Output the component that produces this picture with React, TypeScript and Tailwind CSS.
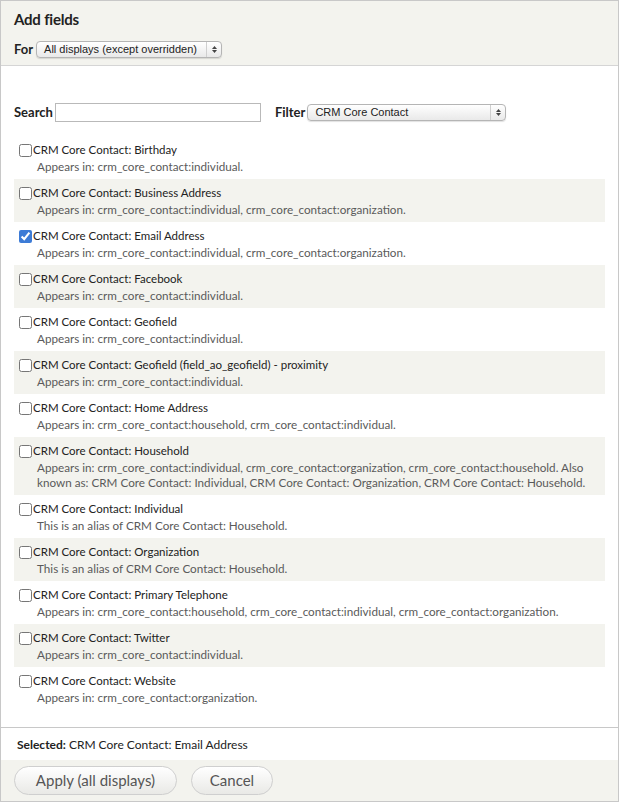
import { useState } from 'react';

const fields = [
  { name: 'Birthday', desc: 'Appears in: crm_core_contact:individual.' },
  { name: 'Business Address', desc: 'Appears in: crm_core_contact:individual, crm_core_contact:organization.' },
  { name: 'Email Address', desc: 'Appears in: crm_core_contact:individual, crm_core_contact:organization.' },
  { name: 'Facebook', desc: 'Appears in: crm_core_contact:individual.' },
  { name: 'Geofield', desc: 'Appears in: crm_core_contact:individual.' },
  { name: 'Geofield (field_ao_geofield) - proximity', desc: 'Appears in: crm_core_contact:individual.' },
  { name: 'Home Address', desc: 'Appears in: crm_core_contact:household, crm_core_contact:individual.' },
  {
    name: 'Household',
    desc: 'Appears in: crm_core_contact:individual, crm_core_contact:organization, crm_core_contact:household. Also known as: CRM Core Contact: Individual, CRM Core Contact: Organization, CRM Core Contact: Household.',
  },
  { name: 'Individual', desc: 'This is an alias of CRM Core Contact: Household.' },
  { name: 'Organization', desc: 'This is an alias of CRM Core Contact: Household.' },
  { name: 'Primary Telephone', desc: 'Appears in: crm_core_contact:household, crm_core_contact:individual, crm_core_contact:organization.' },
  { name: 'Twitter', desc: 'Appears in: crm_core_contact:individual.' },
  { name: 'Website', desc: 'Appears in: crm_core_contact:organization.' },
];

function FakeSelect({ label, width }: { label: string; width: string }) {
  return (
    <div
      className={`${width} h-[17px] flex items-center rounded-[4px] border border-[#b5b5b5] bg-gradient-to-b from-white to-[#e9e9e9] shadow-[0_1px_1px_rgba(0,0,0,0.12)] font-['Liberation_Sans',sans-serif] text-[11px] text-[#222]`}
    >
      <span className="flex-1 pl-[7px] whitespace-nowrap overflow-hidden leading-none">{label}</span>
      <span className="h-full w-[15px] border-l border-[#cfcfcf] flex flex-col items-center justify-center gap-[1px]">
        <svg width="5" height="3" viewBox="0 0 5 3"><path d="M0 3 L2.5 0 L5 3 Z" fill="#444" /></svg>
        <svg width="5" height="3" viewBox="0 0 5 3"><path d="M0 0 L2.5 3 L5 0 Z" fill="#444" /></svg>
      </span>
    </div>
  );
}

export default function App() {
  const [checked, setChecked] = useState<string[]>(['Email Address']);

  const toggle = (n: string) =>
    setChecked((c) => (c.includes(n) ? c.filter((x) => x !== n) : [...c, n]));

  return (
    <div className="w-[619px] h-[802px] border border-[#c8c8c8] bg-white flex flex-col font-['Lato',sans-serif] text-[#222] overflow-hidden">
      {/* Header */}
      <div className="h-[65px] shrink-0 bg-[#f3f3ee] border-b border-[#d5d5d5] px-[13px] pt-[8px]">
        <h1 className="text-[15px] font-bold leading-[20px] tracking-[-0.2px]">Add fields</h1>
        <div className="flex items-center gap-[3px] mt-[11px]">
          <span className="text-[13px] font-bold">For</span>
          <FakeSelect label="All displays (except overridden)" width="w-[186px]" />
        </div>
      </div>

      {/* Body */}
      <div className="flex-1 px-[13px] pt-[37px]">
        <div className="flex items-center h-[19px]">
          <label className="text-[13px] font-bold mr-[2px]">Search</label>
          <input className="w-[206px] h-[19px] border border-[#b9b9b9] outline-none text-[12px] px-1" />
          <label className="text-[13px] font-bold ml-[14px] mr-[2px]">Filter</label>
          <FakeSelect label="CRM Core Contact" width="w-[199px]" />
        </div>

        <div className="mt-[14px] w-[591px]">
          {fields.map((f, i) => (
            <div key={f.name} className={`pt-[5px] pb-[5px] pl-[5px] pr-[10px] ${i % 2 === 1 ? 'bg-[#f3f3ee]' : ''}`}>
              <label className="flex items-center h-[18px] text-[11.5px] leading-[18px] cursor-pointer">
                <input
                  type="checkbox"
                  checked={checked.includes(f.name)}
                  onChange={() => toggle(f.name)}
                  className="w-[13px] h-[13px] m-0 mr-[1px] accent-[#3d7bd6]"
                />
                CRM Core Contact: {f.name}
              </label>
              <p className="pl-[18px] text-[11.7px] leading-[15px] text-[#5a5a5a]">{f.desc}</p>
            </div>
          ))}
        </div>
      </div>

      {/* Selected */}
      <div className="h-[33px] shrink-0 border-t border-[#c8c8c8] px-[16px] flex items-center text-[12px] pt-[1px]">
        <span className="font-bold mr-[3px]">Selected:</span>
        {checked.map((n) => `CRM Core Contact: ${n}`).join(', ')}
      </div>

      {/* Footer */}
      <div className="h-[41px] shrink-0 bg-[#f3f3ee] px-[13px] flex items-center gap-[14px]">
        <button className="h-[29px] w-[163px] rounded-full border border-[#cfcfcf] bg-gradient-to-b from-white to-[#e9e9e6] text-[15px] text-[#555]">
          Apply (all displays)
        </button>
        <button className="h-[29px] w-[82px] rounded-full border border-[#cfcfcf] bg-gradient-to-b from-white to-[#e9e9e6] text-[15px] text-[#555]">
          Cancel
        </button>
      </div>
    </div>
  );
}
